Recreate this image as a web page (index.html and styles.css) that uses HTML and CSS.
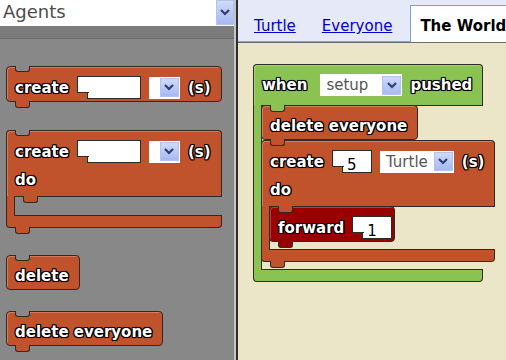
FILE: index.html
```html
<!DOCTYPE html>
<html lang="en">
<head>
  <meta charset="UTF-8" />
  <meta name="viewport" content="width=device-width, initial-scale=1.0" />
  <title>Blocks</title>
  <link rel="stylesheet" href="styles.css">
</head>
<body>
  <div class="app">
    <div class="side">
      <div class="picker">
        <span class="picker-label">Agents</span>
        <span class="picker-btn">
          <svg width="10" height="7" viewBox="0 0 10 7"><polyline points="1,1 5,5 9,1" /></svg>
        </span>
      </div>
      <div class="band"></div>

      <div class="flyout">
        <div class="block orange">
          <div class="row">
            <span class="label">create</span>
            <span class="socket"></span>
            <span class="dropdown empty">
              <span class="dd-btn"><svg width="10" height="7" viewBox="0 0 10 7"><polyline points="1,1 5,5 9,1" /></svg></span>
            </span>
            <span class="label">(s)</span>
          </div>
        </div>

        <div class="block orange cblock">
          <div class="c-top">
            <div class="row">
              <span class="label">create</span>
              <span class="socket"></span>
              <span class="dropdown empty">
                <span class="dd-btn"><svg width="10" height="7" viewBox="0 0 10 7"><polyline points="1,1 5,5 9,1" /></svg></span>
              </span>
              <span class="label">(s)</span>
            </div>
            <div class="row do-row"><span class="label">do</span></div>
          </div>
          <div class="c-mid">
            <div class="arm"></div>
            <div class="c-body"></div>
          </div>
          <div class="c-bottom"></div>
        </div>

        <div class="block orange no-next">
          <div class="row"><span class="label">delete</span></div>
        </div>

        <div class="block orange">
          <div class="row"><span class="label">delete everyone</span></div>
        </div>
      </div>
    </div>

    <div class="main">
      <div class="tabs">
        <a class="tab-link" href="#">Turtle</a>
        <a class="tab-link" href="#">Everyone</a>
        <span class="tab active">The World</span>
      </div>

      <div class="workspace">
        <div class="block green cblock no-prev no-next">
          <div class="c-top">
            <div class="row hat-row">
              <span class="label when">when</span>
              <span class="dropdown wide">
                <span class="dd-text">setup</span>
                <span class="dd-btn"><svg width="10" height="7" viewBox="0 0 10 7"><polyline points="1,1 5,5 9,1" /></svg></span>
              </span>
              <span class="label">pushed</span>
            </div>
          </div>
          <div class="c-mid">
            <div class="arm"></div>
            <div class="c-body">
              <div class="block orange">
                <div class="row"><span class="label">delete everyone</span></div>
              </div>

              <div class="block orange cblock">
                <div class="c-top">
                  <div class="row">
                    <span class="label">create</span>
                    <span class="socket num">5</span>
                    <span class="dropdown">
                      <span class="dd-text">Turtle</span>
                      <span class="dd-btn"><svg width="10" height="7" viewBox="0 0 10 7"><polyline points="1,1 5,5 9,1" /></svg></span>
                    </span>
                    <span class="label">(s)</span>
                  </div>
                  <div class="row do-row"><span class="label">do</span></div>
                </div>
                <div class="c-mid">
                  <div class="arm"></div>
                  <div class="c-body">
                    <div class="block red">
                      <div class="row tight">
                        <span class="label">forward</span>
                        <span class="socket num">1</span>
                      </div>
                    </div>
                  </div>
                </div>
                <div class="c-bottom"></div>
              </div>
            </div>
          </div>
          <div class="c-bottom"></div>
        </div>
      </div>
    </div>
  </div>
</body>
</html>
```

FILE: styles.css
```css
body {
  margin: 0;
  font-family: "DejaVu Sans", sans-serif;
}
.app {
  display: flex;
  height: 360px;
  overflow: hidden;
}

/* left side: picker + flyout */
.side {
  width: 234px;
  border-right: 2px solid #c4c4c4;
  display: flex;
  flex-direction: column;
  background: #888888;
}
.picker {
  height: 26px;
  background: #ffffff;
  display: flex;
}
.picker-label {
  flex: 1;
  padding-left: 3px;
  font-size: 18px;
  line-height: 24px;
  color: #4d4d4d;
}
.picker-btn {
  width: 18px;
  height: 25px;
  box-sizing: border-box;
  border: 1px solid #b3c3f0;
  background: linear-gradient(#cfdafa, #a6baf0);
  display: flex;
  align-items: center;
  justify-content: center;
}
svg polyline {
  fill: none;
  stroke: #2c3e72;
  stroke-width: 2.2;
}
.band {
  height: 12px;
  background: #7c7c7c;
  border-bottom: 1px solid #6e6e6e;
}
.flyout {
  flex: 1;
  padding: 27px 0 0 6px;
  display: flex;
  flex-direction: column;
  align-items: flex-start;
  gap: 21px;
}
.flyout > .block {
  margin-bottom: 6px;
}
.flyout > .cblock {
  margin-top: 1px;
}
.flyout > .no-next {
  margin-bottom: 0;
}

/* right side: tabs + workspace */
.main {
  flex: 1;
  min-width: 0;
  border-left: 2px solid #2e2e2e;
  display: flex;
  flex-direction: column;
  overflow: hidden;
}
.tabs {
  height: 41px;
  background: #e6e9f7;
  border-bottom: 1px solid #8aa0d8;
  display: flex;
  align-items: flex-end;
  padding-left: 16px;
  gap: 26px;
  font-size: 15px;
  white-space: nowrap;
}
.tab-link {
  color: #0000cc;
  line-height: 24px;
  padding-bottom: 3px;
}
.tab {
  margin-left: -8px;
  margin-bottom: -1px;
  padding: 8px 30px 4px 9px;
  line-height: 24px;
  background: #ffffff;
  border: 1px solid #7f9ee0;
  border-bottom: 0;
  font-weight: bold;
  color: #000;
}
.workspace {
  flex: 1;
  background: #ebe6c8;
  border-top: 1px solid #6b6b6b;
  padding: 21px 0 0 15px;
}

/* blocks */
.block {
  --c: #c0532b;
  position: relative;
  width: max-content;
  background: var(--c);
  border: 1px solid #2f2a26;
  border-radius: 4px;
  box-shadow: inset 1px 1px 0 rgba(255, 255, 255, 0.25);
}
.orange { --c: #c0532b; }
.red { --c: #990000; }
.green { --c: #8bc352; }

.block::before {
  content: "";
  position: absolute;
  top: -1px;
  left: 8px;
  width: 13px;
  height: 5px;
  background: #888888;
  border: 1px solid #2f2a26;
  border-top: 0;
  border-radius: 0 0 3px 3px;
  z-index: 1;
}
.block::after,
.c-top::after {
  content: "";
  position: absolute;
  bottom: -7px;
  left: 8px;
  width: 13px;
  height: 6px;
  background: var(--c);
  border: 1px solid #2f2a26;
  border-top: 0;
  border-radius: 0 0 3px 3px;
  z-index: 2;
}
.no-prev::before,
.no-next::after {
  display: none;
}

.row {
  display: flex;
  align-items: center;
  gap: 8px;
  min-height: 22px;
  padding: 9px 10px 2px 8px;
}
.do-row {
  min-height: 24px;
  padding: 3px 10px 4px 8px;
}
.hat-row {
  padding-bottom: 9px;
}
.tight {
  padding-right: 2px;
}
.label {
  color: #ffffff;
  font-weight: bold;
  font-size: 15px;
  white-space: nowrap;
  text-shadow: 1px 0 0 #000, -1px 0 0 #000, 0 1px 0 #000, 0 -1px 0 #000,
    1px 1px 0 #000, -1px -1px 0 #000, 1px -1px 0 #000, -1px 1px 0 #000,
    0 0 2px #000;
}
.when {
  margin-right: 5px;
}

/* C shaped blocks */
.cblock {
  background: none;
  border: 0;
  box-shadow: none;
  display: flex;
  flex-direction: column;
}
.cblock::before {
  top: 0;
  left: 9px;
}
.cblock::after {
  bottom: -6px;
  left: 9px;
}
.c-top {
  position: relative;
  background: var(--c);
  border: 1px solid #2f2a26;
  border-bottom: 0;
  border-radius: 4px 4px 0 0;
  box-shadow: inset 1px 1px 0 rgba(255, 255, 255, 0.25);
}
.c-top::after {
  left: 16px;
}
.c-mid {
  display: flex;
}
.arm {
  width: 7px;
  background: var(--c);
  border-left: 1px solid #2f2a26;
  border-right: 1px solid #2f2a26;
}
.c-body {
  flex: 1 1 0;
  width: 0;
  min-width: 0;
  min-height: 11px;
  margin-left: -1px;
  padding-bottom: 7px;
  border-top: 1px solid #2f2a26;
  border-bottom: 1px solid #2f2a26;
  display: flex;
  flex-direction: column;
  align-items: flex-start;
}
.c-body > .block:first-child {
  margin-top: -1px;
}
.c-bottom {
  height: 11px;
  background: var(--c);
  border: 1px solid #2f2a26;
  border-top: 0;
  border-radius: 0 0 4px 4px;
}

/* inputs */
.socket {
  position: relative;
  width: 48px;
  height: 21px;
  margin-left: 10px;
  background: #ffffff;
  border: 1px solid #2f2a26;
  display: flex;
  align-items: flex-end;
  padding-left: 4px;
  box-sizing: content-box;
  font-size: 15px;
  line-height: 13px;
  color: #000;
}
.socket.num {
  width: 24px;
}
.socket::before {
  content: "";
  position: absolute;
  left: -11px;
  top: -1px;
  width: 11px;
  height: 15px;
  background: #ffffff;
  border: 1px solid #2f2a26;
  border-right: 0;
}
.dropdown {
  display: flex;
  align-items: center;
  gap: 6px;
  height: 22px;
  padding: 0 1px 0 6px;
  background: #ffffff;
  font-size: 15px;
  color: #555555;
}
.dropdown.empty {
  padding-left: 11px;
}
.dropdown.wide {
  width: 82px;
  box-sizing: border-box;
}
.dd-btn {
  width: 17px;
  height: 17px;
  margin-left: auto;
  border: 1px solid #b3c3f0;
  background: linear-gradient(#cfdafa, #a6baf0);
  display: flex;
  align-items: center;
  justify-content: center;
}
```
